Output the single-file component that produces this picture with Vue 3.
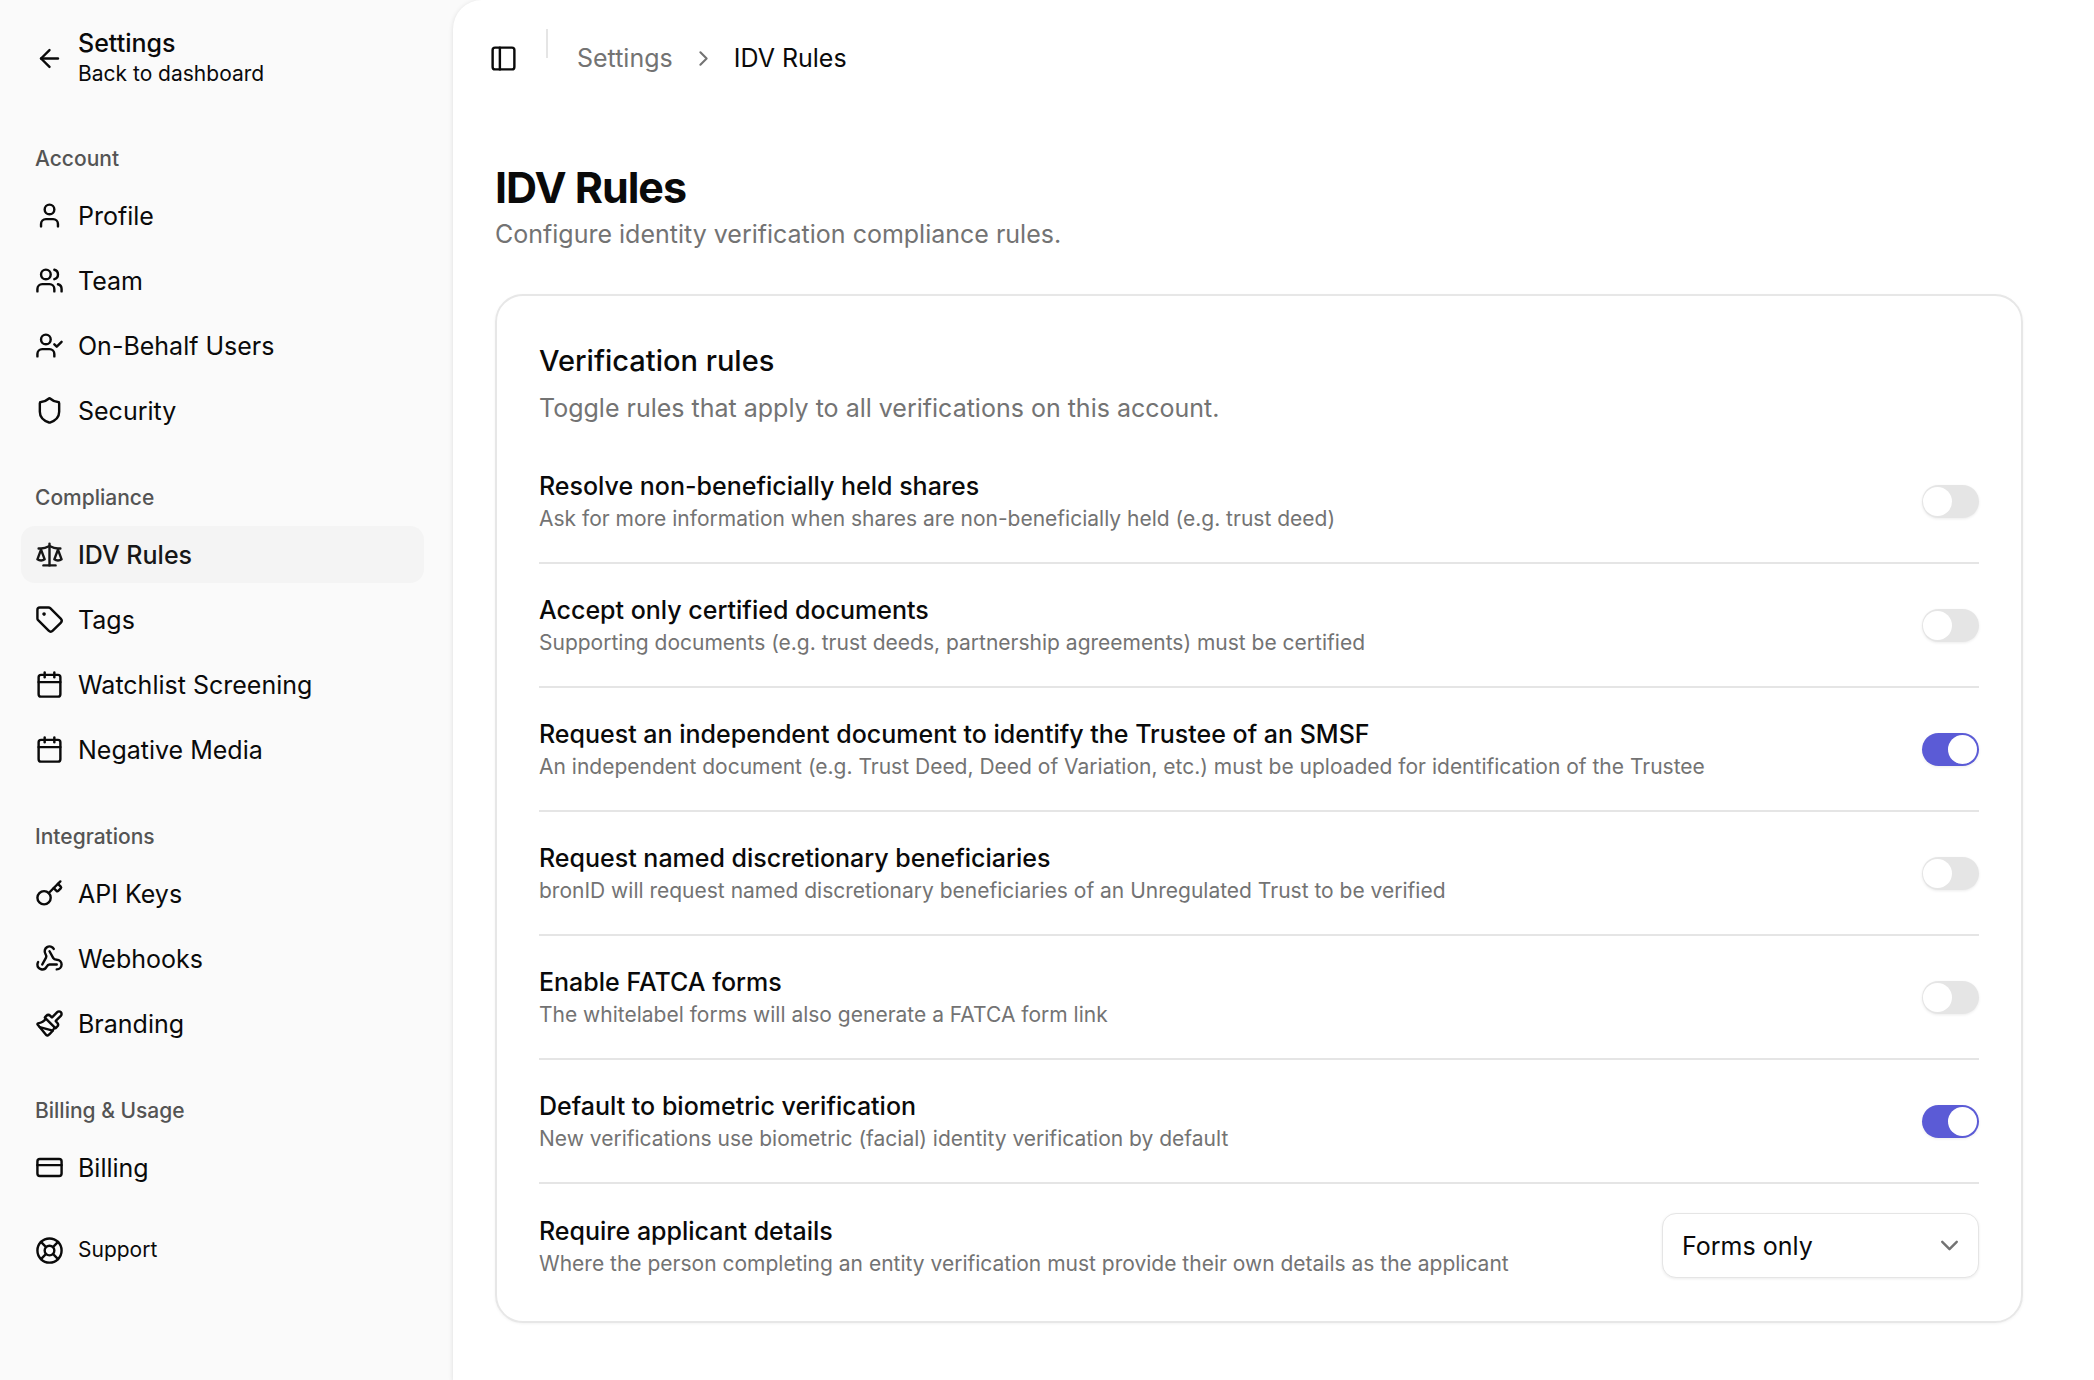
<script setup>
import { ref } from 'vue';

const icons = {
  user: ["M19 21v-2a4 4 0 0 0-4-4H9a4 4 0 0 0-4 4v2", "M8 7a4 4 0 1 0 8 0a4 4 0 1 0-8 0"],
  users: ["M16 21v-2a4 4 0 0 0-4-4H6a4 4 0 0 0-4 4v2", "M5 7a4 4 0 1 0 8 0a4 4 0 1 0-8 0", "M22 21v-2a4 4 0 0 0-3-3.87", "M16 3.13a4 4 0 0 1 0 7.75"],
  userCheck: ["M16 21v-2a4 4 0 0 0-4-4H6a4 4 0 0 0-4 4v2", "M5 7a4 4 0 1 0 8 0a4 4 0 1 0-8 0", "m16 11 2 2 4-4"],
  shield: ["M20 13c0 5-3.5 7.5-7.66 8.95a1 1 0 0 1-.67-.01C7.5 20.5 4 18 4 13V6a1 1 0 0 1 1-1c2 0 4.5-1.2 6.24-2.72a1.17 1.17 0 0 1 1.52 0C14.51 3.81 17 5 19 5a1 1 0 0 1 1 1z"],
  scale: ["m16 16 3-8 3 8c-.87.65-1.92 1-3 1s-2.13-.35-3-1Z", "m2 16 3-8 3 8c-.87.65-1.92 1-3 1s-2.13-.35-3-1Z", "M7 21h10", "M12 3v18", "M3 7h2c2 0 5-1 7-2 2 1 5 2 7 2h2"],
  tag: ["M12.586 2.586A2 2 0 0 0 11.172 2H4a2 2 0 0 0-2 2v7.172a2 2 0 0 0 .586 1.414l8.704 8.704a2.426 2.426 0 0 0 3.42 0l6.58-6.58a2.426 2.426 0 0 0 0-3.42z", "M7 7.5a.5.5 0 1 0 1 0a.5.5 0 1 0-1 0"],
  calendar: ["M8 2v4", "M16 2v4", "M5 4h14a2 2 0 0 1 2 2v14a2 2 0 0 1-2 2H5a2 2 0 0 1-2-2V6a2 2 0 0 1 2-2z", "M3 10h18"],
  key: ["m15.5 7.5 2.3 2.3a1 1 0 0 0 1.4 0l2.1-2.1a1 1 0 0 0 0-1.4L19 4", "m21 2-9.6 9.6", "M2 15.5a5.5 5.5 0 1 0 11 0a5.5 5.5 0 1 0-11 0"],
  webhook: ["M18 16.98h-5.99c-1.1 0-1.95.94-2.48 1.9A4 4 0 0 1 2 17c.01-.7.2-1.4.57-2", "m6 17 3.13-5.78c.53-.97.1-2.18-.5-3.1a4 4 0 1 1 6.89-4.06", "m12 6 3.13 5.73C15.66 12.7 16.9 13 18 13a4 4 0 0 1 0 8"],
  brush: ["m14.622 17.897-10.68-2.913", "M18.376 2.622a1 1 0 1 1 3.002 3.002L17.36 9.643a.5.5 0 0 0 0 .707l.944.944a2.41 2.41 0 0 1 0 3.408l-.944.944a.5.5 0 0 1-.707 0L8.354 7.348a.5.5 0 0 1 0-.707l.944-.944a2.41 2.41 0 0 1 3.408 0l.944.944a.5.5 0 0 0 .707 0z", "M9 8c-1.804 2.71-3.97 3.46-6.583 3.948a.507.507 0 0 0-.302.819l7.32 8.883a1 1 0 0 0 1.185.204C12.735 20.405 16 16.792 16 15"],
  card: ["M4 5h16a2 2 0 0 1 2 2v10a2 2 0 0 1-2 2H4a2 2 0 0 1-2-2V7a2 2 0 0 1 2-2z", "M2 10h20"],
};

const groups = [
  {
    label: "Account",
    items: [
      { name: "Profile", icon: "user" },
      { name: "Team", icon: "users" },
      { name: "On-Behalf Users", icon: "userCheck" },
      { name: "Security", icon: "shield" },
    ],
  },
  {
    label: "Compliance",
    items: [
      { name: "IDV Rules", icon: "scale", active: true },
      { name: "Tags", icon: "tag" },
      { name: "Watchlist Screening", icon: "calendar" },
      { name: "Negative Media", icon: "calendar" },
    ],
  },
  {
    label: "Integrations",
    items: [
      { name: "API Keys", icon: "key" },
      { name: "Webhooks", icon: "webhook" },
      { name: "Branding", icon: "brush" },
    ],
  },
  {
    label: "Billing & Usage",
    items: [{ name: "Billing", icon: "card" }],
  },
];

const rules = ref([
  { id: "shares", title: "Resolve non-beneficially held shares", text: "Ask for more information when shares are non-beneficially held (e.g. trust deed)", on: false },
  { id: "certified", title: "Accept only certified documents", text: "Supporting documents (e.g. trust deeds, partnership agreements) must be certified", on: false },
  { id: "smsf", title: "Request an independent document to identify the Trustee of an SMSF", text: "An independent document (e.g. Trust Deed, Deed of Variation, etc.) must be uploaded for identification of the Trustee", on: true },
  { id: "beneficiaries", title: "Request named discretionary beneficiaries", text: "bronID will request named discretionary beneficiaries of an Unregulated Trust to be verified", on: false },
  { id: "fatca", title: "Enable FATCA forms", text: "The whitelabel forms will also generate a FATCA form link", on: false },
  { id: "biometric", title: "Default to biometric verification", text: "New verifications use biometric (facial) identity verification by default", on: true },
]);

const applicantDetails = ref("forms");
const sidebarOpen = ref(true);
</script>

<template>
  <div class="layout">
    <aside v-show="sidebarOpen" class="sidebar">
      <a href="#" class="back">
        <svg class="icon" viewBox="0 0 24 24"><path d="m12 19-7-7 7-7" /><path d="M19 12H5" /></svg>
        <span class="back-text">
          <span class="back-title">Settings</span>
          <span class="back-sub">Back to dashboard</span>
        </span>
      </a>

      <nav>
        <section v-for="group in groups" :key="group.label" class="group">
          <h2>{{ group.label }}</h2>
          <ul>
            <li v-for="item in group.items" :key="item.name">
              <a href="#" class="item" :class="{ active: item.active }">
                <svg class="icon" viewBox="0 0 24 24">
                  <path v-for="d in icons[item.icon]" :key="d" :d="d" />
                </svg>
                <span>{{ item.name }}</span>
              </a>
            </li>
          </ul>
        </section>
        <a href="#" class="item support">
          <svg class="icon" viewBox="0 0 24 24">
            <circle cx="12" cy="12" r="10" />
            <circle cx="12" cy="12" r="4" />
            <path d="m4.93 4.93 4.24 4.24M14.83 9.17l4.24-4.24M14.83 14.83l4.24 4.24M9.17 14.83l-4.24 4.24" />
          </svg>
          <span>Support</span>
        </a>
      </nav>
    </aside>

    <main>
      <header>
        <button type="button" class="toggle" aria-label="Toggle sidebar" @click="sidebarOpen = !sidebarOpen">
          <svg class="icon" viewBox="0 0 24 24"><rect x="3" y="3" width="18" height="18" rx="2" /><path d="M9 3v18" /></svg>
        </button>
        <div class="separator"></div>
        <div class="crumbs">
          <a href="#">Settings</a>
          <svg class="icon small" viewBox="0 0 24 24"><path d="m9 18 6-6-6-6" /></svg>
          <span>IDV Rules</span>
        </div>
      </header>

      <div class="content">
        <h1>IDV Rules</h1>
        <p class="lead">Configure identity verification compliance rules.</p>

        <section class="card">
          <h3>Verification rules</h3>
          <p class="card-sub">Toggle rules that apply to all verifications on this account.</p>

          <div class="rules">
            <div v-for="rule in rules" :key="rule.id" class="rule">
              <div class="rule-text">
                <label :for="rule.id">{{ rule.title }}</label>
                <p>{{ rule.text }}</p>
              </div>
              <input :id="rule.id" v-model="rule.on" type="checkbox" role="switch" class="switch" />
            </div>
            <div class="rule">
              <div class="rule-text">
                <label for="applicant">Require applicant details</label>
                <p>Where the person completing an entity verification must provide their own details as the applicant</p>
              </div>
              <div class="select">
                <select id="applicant" v-model="applicantDetails">
                  <option value="forms">Forms only</option>
                </select>
                <svg class="icon" viewBox="0 0 24 24"><path d="m6 9 6 6 6-6" /></svg>
              </div>
            </div>
          </div>
        </section>
      </div>
    </main>
  </div>
</template>

<style>
  body{
    background-color: #fafafa;
  }
</style>

<style scoped>
  .layout{
    display: flex;
    min-height: 100vh;
    background-color: #fafafa;
    color: #0a0a0a;
    font-family: Inter, "Liberation Sans", sans-serif;
    font-size: 25px;
    line-height: 36px;
  }
  h1, h2, h3, p, ul{
    margin: 0;
    padding: 0;
  }
  ul{
    list-style: none;
    display: flex;
    flex-direction: column;
    gap: 8px;
  }
  a{
    color: inherit;
    text-decoration: none;
  }
  .icon{
    width: 29px;
    height: 29px;
    flex-shrink: 0;
    fill: none;
    stroke: currentColor;
    stroke-width: 2;
    stroke-linecap: round;
    stroke-linejoin: round;
  }
  .icon.small{
    width: 25px;
    height: 25px;
  }

  .sidebar{
    width: 453px;
    flex-shrink: 0;
    box-sizing: border-box;
    padding: 15px 29px 29px 21px;
  }
  .back{
    display: flex;
    align-items: center;
    gap: 14px;
    height: 86px;
    padding: 0 14px;
    margin-bottom: 28px;
  }
  .back-text{
    display: flex;
    flex-direction: column;
  }
  .back-title{
    font-weight: 500;
    line-height: 31px;
  }
  .back-sub{
    font-size: 21px;
    line-height: 29px;
  }
  .group{
    margin-bottom: 29px;
  }
  .group h2{
    height: 58px;
    padding: 0 14px;
    font-size: 21px;
    font-weight: 500;
    line-height: 60px;
    color: #545454;
  }
  .item{
    display: flex;
    align-items: center;
    gap: 14px;
    height: 57px;
    padding: 0 14px;
    border-radius: 14px;
  }
  .item.active{
    background-color: #f4f4f4;
    color: #171717;
    font-weight: 500;
  }
  .support{
    height: 50px;
    font-size: 21px;
  }

  main{
    flex: 1;
    min-width: 0;
    background-color: white;
    border-radius: 29px 0 0 0;
    box-shadow: 0 1px 5px rgba(0, 0, 0, 0.12);
  }
  header{
    display: flex;
    align-items: center;
    height: 116px;
    padding: 0 29px;
  }
  .toggle{
    display: flex;
    align-items: center;
    justify-content: center;
    width: 43px;
    height: 43px;
    padding: 0;
    border: none;
    background: none;
    color: inherit;
    cursor: pointer;
  }
  .separator{
    align-self: flex-start;
    width: 2px;
    height: 29px;
    margin: 29px 29px 0 21px;
    background-color: #e5e5e5;
  }
  .crumbs{
    display: flex;
    align-items: center;
    gap: 18px;
  }
  .crumbs a, .crumbs svg{
    color: #737373;
  }

  .content{
    padding: 43px 71px 58px 42px;
  }
  h1{
    font-size: 43px;
    font-weight: 700;
    line-height: 57px;
    letter-spacing: -1px;
  }
  .lead, .card-sub{
    color: #737373;
  }
  .card{
    margin-top: 42px;
    padding: 43px 42px;
    border: 2px solid #e7e7e7;
    border-radius: 28px;
    box-shadow: 0 1px 3px rgba(0, 0, 0, 0.05);
  }
  h3{
    font-size: 29px;
    font-weight: 500;
    line-height: 43px;
  }
  .card-sub{
    margin-top: 8px;
  }
  .rules{
    margin-top: 43px;
  }
  .rule{
    display: flex;
    align-items: center;
    justify-content: space-between;
    gap: 29px;
    padding: 29px 0;
    border-bottom: 2px solid #e5e5e5;
  }
  .rule:first-child{
    padding-top: 0;
  }
  .rule:last-child{
    padding-bottom: 0;
    border-bottom: none;
  }
  .rule label{
    display: block;
    font-weight: 500;
    line-height: 35px;
  }
  .rule p{
    font-size: 21px;
    line-height: 29px;
    color: #737373;
  }
  .switch{
    appearance: none;
    display: flex;
    align-items: center;
    flex-shrink: 0;
    width: 57px;
    height: 33px;
    margin: 0;
    padding: 0 1px;
    box-sizing: border-box;
    border-radius: 17px;
    background-color: #e5e5e5;
    box-shadow: 0 1px 3px rgba(0, 0, 0, 0.08);
    cursor: pointer;
  }
  .switch::before{
    content: "";
    width: 29px;
    height: 29px;
    border-radius: 50%;
    background-color: white;
  }
  .switch:checked{
    justify-content: flex-end;
    padding: 0 2px;
    background-color: #5b5bd6;
  }
  .select{
    display: grid;
    align-items: center;
    width: 317px;
    flex-shrink: 0;
  }
  .select select, .select svg{
    grid-area: 1 / 1;
  }
  .select select{
    appearance: none;
    width: 100%;
    height: 65px;
    padding: 0 57px 0 19px;
    border: 1px solid #e5e5e5;
    border-radius: 14px;
    background-color: white;
    box-shadow: 0 1px 3px rgba(0, 0, 0, 0.08);
    color: inherit;
    font-family: inherit;
    font-size: 25px;
  }
  .select svg{
    justify-self: end;
    margin-right: 15px;
    color: #737373;
    pointer-events: none;
  }
</style>
